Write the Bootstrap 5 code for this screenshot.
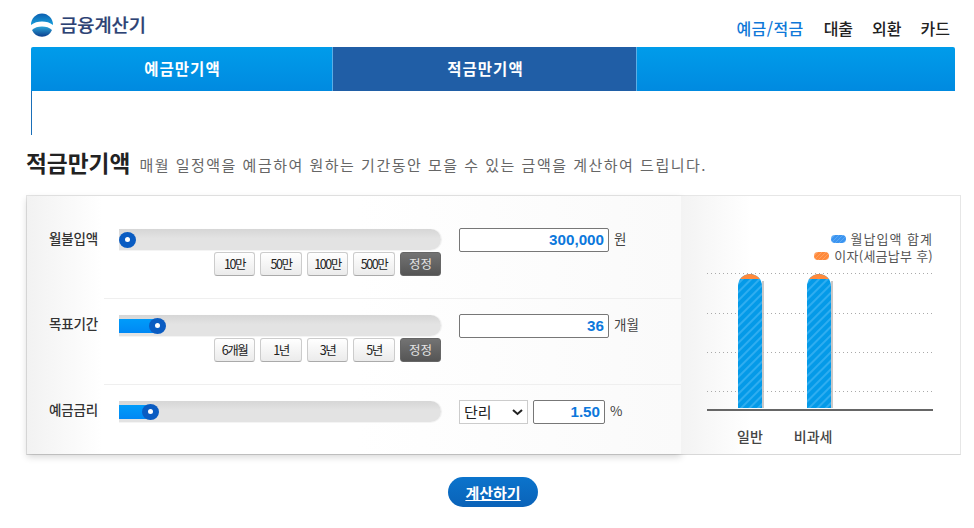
<!DOCTYPE html>
<html lang="ko">
<head>
<meta charset="utf-8">
<title>금융계산기</title>
<link href="https://cdn.jsdelivr.net/npm/bootstrap@5.3.0/dist/css/bootstrap.min.css" rel="stylesheet">
<style>
body{font-family:"Noto Sans CJK KR","Liberation Sans",sans-serif;color:#333;background:#fff;overflow:hidden}
.topbar{height:47px;padding:0 24px 0 31px}
.logo-txt{font-size:18.7px;font-weight:500;color:#2c4274;margin-left:7px;line-height:1;padding-bottom:2px;-webkit-text-stroke:.2px #2c4274}
.logo-wrap{padding-top:3px}
.menu-link{font-size:16px;font-weight:500;color:#222;text-decoration:none;line-height:1;margin-left:19px;padding-top:9px}
.menu-link.on{color:#0f78d8;letter-spacing:.4px;margin-right:1px}
.tabwrap{margin:0 19px 0 31px}
.tabbar{height:44px;background:linear-gradient(#009cea,#008ae0);border-radius:2px 2px 0 0}
.tabitem{width:302px;border-right:1px solid #5aaee6;color:#fff;font-size:15.5px;font-weight:700;letter-spacing:1px;padding-left:2px;text-decoration:none}
.tabitem.on{background:#205ea6;width:304px}
.tabitem:hover,.tabitem:focus{color:#fff}
.tabbody{height:44px;border-left:1px solid #1a6fb8}
.headline{margin:13px 0 0 26px;height:47px}
.headline h2{font-size:22.7px;font-weight:700;color:#222;margin:0;line-height:30px}
.headline p{font-size:15px;letter-spacing:1.5px;color:#666;margin:0 0 0 9px;line-height:30px;padding-top:2px;white-space:nowrap}
.panel{margin:0 13px 0 26px;height:260px;border:1px solid #e6e6e6;border-bottom-color:#d8d8d8;background:#fff}
.inputs{width:654px;background:linear-gradient(to right,#f2f2f2 0,#fff 75px,#fff 330px,#fafafa 100%);box-shadow:0 3px 7px rgba(0,0,0,.16)}
.fieldname{width:77px;padding-left:22px;font-size:13.5px;font-weight:500;color:#333;letter-spacing:-.2px;flex:none}
.r1 .fieldname{padding-top:32px}
.r2 .fieldname,.r3 .fieldname{padding-top:14px}
.fieldbody{flex:1;padding-left:15px;border-bottom:1px solid #efefef}
.r1{height:103px}.r2{height:86px}.r3{height:69px}
.r3 .fieldbody{border-bottom:0}
.r1 .fieldbody{padding-top:33px}
.r2 .fieldbody,.r3 .fieldbody{padding-top:16px}
.slidecol{width:322px;flex:none}
.track{height:21px;background:linear-gradient(#d6d6d6,#e3e3e3 45%,#e3e3e3);border-radius:0 11px 11px 0;box-shadow:0 1px 0 #f4f4f4,1px 0 1px #eee;padding-top:4px}
.fillbar{height:14px;background:linear-gradient(#009cfa,#0088f4)}
.knob{position:absolute;top:3px;width:17px;height:16px;margin-left:-8px;border-radius:50%;background:#0a5cc2}
.knob::after{content:"";position:absolute;left:6px;top:5px;width:5px;height:5px;border-radius:50%;background:#fff}
.quick{margin-top:2px;gap:5px}
.qbtn{height:24px;padding:0;font-size:12.5px;letter-spacing:-1.5px;color:#222;background:linear-gradient(#fff,#ebebeb);border:1px solid #ccc;border-bottom-color:#aaa;border-radius:3px;line-height:22px;font-weight:400}
.qw1{width:41px}.qw2{width:42px}
.qbtn.dark{background:linear-gradient(#737373,#555);border-color:#666;color:#e4e4e4;letter-spacing:0;font-size:12.5px}
.entrycol{margin-left:18px;margin-top:-1px;gap:5px}
.numbox{height:24px;border:1px solid #777;border-radius:2px;padding:0 4px 2px 0;text-align:right;font:700 15.200px/20px "Liberation Sans",sans-serif;color:#0c78dc;background:#fff;outline:0}
.w150{width:150px}.w72{width:72px}
.unit{font-size:13.5px;color:#444}
.ratesel{width:69px;height:24px;padding:0 0 0 4px;font-size:15px;line-height:22px;color:#222;border:1px solid #ccc;border-radius:0;background-position:right 3px center;background-size:13px 10px;background-image:url("data:image/svg+xml,%3csvg xmlns='http://www.w3.org/2000/svg' viewBox='0 0 13 10'%3e%3cpath fill='none' stroke='%23222' stroke-width='2' d='M2 3l4.500 4 4.500-4'/%3e%3c/svg%3e")}
.graph{flex:1;background:linear-gradient(to right,#f3f3f3 0,#fff 70px);padding:34px 27px 0 26px}
.legendline{font-size:13px;line-height:17px;color:#555;letter-spacing:.25px}
.legendline.wide{letter-spacing:1px}
.swatch{width:15px;height:8px;border-radius:4px;margin-right:5px;background:repeating-linear-gradient(135deg,#3b94f0 0 2px,#5aa8f4 2px 3px)}
.swatch.alt{background:repeating-linear-gradient(135deg,#ff8a3c 0 2px,#ffa060 2px 3px)}
.plot{display:block;margin-top:7px}
.xlabels{font-size:14px;font-weight:500;color:#444;margin-top:14px;line-height:18px}
.xa{margin-left:30px}.xb{margin-left:31px}
.calcbtn{width:90px;height:30px;padding:0;border-radius:15px;border:0;background:linear-gradient(#0b74cc,#0a62b8);color:#fff;font-size:15px;font-weight:700;text-decoration:underline;line-height:29px}
.calcbtn:hover{background:#0a62b8;color:#fff}
.calcwrap{margin:22px 0 0 12px}
</style>
</head>
<body>
<header class="topbar d-flex justify-content-between align-items-center">
  <a class="d-flex align-items-center text-decoration-none logo-wrap" href="#">
    <svg width="22" height="24" viewBox="0 0 22 24" aria-hidden="true">
      <defs>
        <linearGradient id="lgT" x1="0" y1="0" x2="0" y2="1"><stop offset="0" stop-color="#0d5fb0"/><stop offset="1" stop-color="#16a0dc"/></linearGradient>
        <linearGradient id="lgB" x1="0" y1="0" x2="0" y2="1"><stop offset="0" stop-color="#2aa4d8"/><stop offset="1" stop-color="#0c3f8e"/></linearGradient>
      </defs>
      <path d="M0 12a11 11.500 0 0 1 22 0c-3-2.500-7-3.500-11-3.500S3 9.500 0 12z" fill="url(#lgT)"/>
      <path d="M1 17c2.500-2.500 6-3.500 10-3.500s7.500 1 10 3.500a11 11.500 0 0 1-20 0z" fill="url(#lgB)"/>
    </svg>
    <span class="logo-txt">금융계산기</span>
  </a>
  <nav class="nav">
    <a class="menu-link on" href="#">예금/적금</a>
    <a class="menu-link" href="#">대출</a>
    <a class="menu-link" href="#">외환</a>
    <a class="menu-link" href="#">카드</a>
  </nav>
</header>

<div class="tabwrap">
  <div class="tabbar d-flex">
    <a class="tabitem d-flex align-items-center justify-content-center" href="#">예금만기액</a>
    <a class="tabitem on d-flex align-items-center justify-content-center" href="#">적금만기액</a>
  </div>
  <div class="tabbody"></div>
</div>

<div class="headline d-flex align-items-start">
  <h2>적금만기액</h2>
  <p>매월 일정액을 예금하여 원하는 기간동안 모을 수 있는 금액을 계산하여 드립니다.</p>
</div>

<section class="panel d-flex">
  <div class="inputs">
    <div class="r1 d-flex">
      <div class="fieldname">월불입액</div>
      <div class="fieldbody d-flex">
        <div class="slidecol">
          <div class="track position-relative"><div class="knob" style="left:8px"></div></div>
          <div class="quick d-flex justify-content-end">
            <button type="button" class="btn qbtn qw1">10만</button>
            <button type="button" class="btn qbtn qw2">50만</button>
            <button type="button" class="btn qbtn qw1">100만</button>
            <button type="button" class="btn qbtn qw2">500만</button>
            <button type="button" class="btn qbtn qw1 dark">정정</button>
          </div>
        </div>
        <div class="entrycol d-flex align-items-start">
          <input class="numbox w150" value="300,000" aria-label="월불입액"><span class="unit">원</span>
        </div>
      </div>
    </div>
    <div class="r2 d-flex">
      <div class="fieldname">목표기간</div>
      <div class="fieldbody d-flex">
        <div class="slidecol">
          <div class="track position-relative"><div class="fillbar" style="width:38px"></div><div class="knob" style="left:38px"></div></div>
          <div class="quick d-flex justify-content-end">
            <button type="button" class="btn qbtn qw1">6개월</button>
            <button type="button" class="btn qbtn qw2">1년</button>
            <button type="button" class="btn qbtn qw1">3년</button>
            <button type="button" class="btn qbtn qw2">5년</button>
            <button type="button" class="btn qbtn qw1 dark">정정</button>
          </div>
        </div>
        <div class="entrycol d-flex align-items-start">
          <input class="numbox w150" value="36" aria-label="목표기간"><span class="unit">개월</span>
        </div>
      </div>
    </div>
    <div class="r3 d-flex">
      <div class="fieldname">예금금리</div>
      <div class="fieldbody d-flex">
        <div class="slidecol">
          <div class="track position-relative"><div class="fillbar" style="width:31px"></div><div class="knob" style="left:31px"></div></div>
        </div>
        <div class="entrycol d-flex align-items-start">
          <select class="form-select ratesel" aria-label="이자 방식"><option>단리</option><option>복리</option></select>
          <input class="numbox w72" value="1.50" aria-label="예금금리"><span class="unit">%</span>
        </div>
      </div>
    </div>
  </div>
  <div class="graph">
    <div class="legendline wide d-flex align-items-center justify-content-end"><span class="swatch"></span>월납입액 합계</div>
    <div class="legendline d-flex align-items-center justify-content-end"><span class="swatch alt"></span>이자(세금납부 후)</div>
    <svg class="plot" width="226" height="142" viewBox="0 0 226 142" aria-hidden="true">
      <defs>
        <pattern id="hatch" width="6" height="6" patternUnits="userSpaceOnUse" patternTransform="rotate(45)">
          <rect width="6" height="6" fill="#049ae8"/><rect width="2" height="6" fill="#2fadf0"/>
        </pattern>
        <clipPath id="b1"><rect x="31" y="3" width="24" height="160" rx="12"/></clipPath>
        <clipPath id="b2"><rect x="100" y="3" width="24" height="160" rx="12"/></clipPath>
      </defs>
      <path stroke="#aaa" stroke-dasharray="1 3" stroke-width="1" fill="none" d="M0 2.500H226M0 42.500H226M0 81.500H226M0 120.500H226"/>
      <rect x="55" y="10" width="2" height="127" fill="#bbb" opacity=".8"/>
      <rect x="124" y="10" width="2" height="127" fill="#bbb" opacity=".8"/>
      <g clip-path="url(#b1)"><rect x="31" y="3" width="24" height="134" fill="url(#hatch)"/><rect x="31" y="3" width="24" height="5" fill="#ff8a3c"/></g>
      <g clip-path="url(#b2)"><rect x="100" y="3" width="24" height="134" fill="url(#hatch)"/><rect x="100" y="3" width="24" height="5" fill="#ff8a3c"/></g>
      <rect x="0" y="138" width="226" height="2" fill="#666"/>
    </svg>
    <div class="xlabels d-flex"><span class="xa">일반</span><span class="xb">비과세</span></div>
  </div>
</section>

<div class="calcwrap d-flex justify-content-center">
  <button type="button" class="btn calcbtn">계산하기</button>
</div>
<script src="https://cdn.jsdelivr.net/npm/bootstrap@5.3.0/dist/js/bootstrap.bundle.min.js"></script>
</body>
</html>
